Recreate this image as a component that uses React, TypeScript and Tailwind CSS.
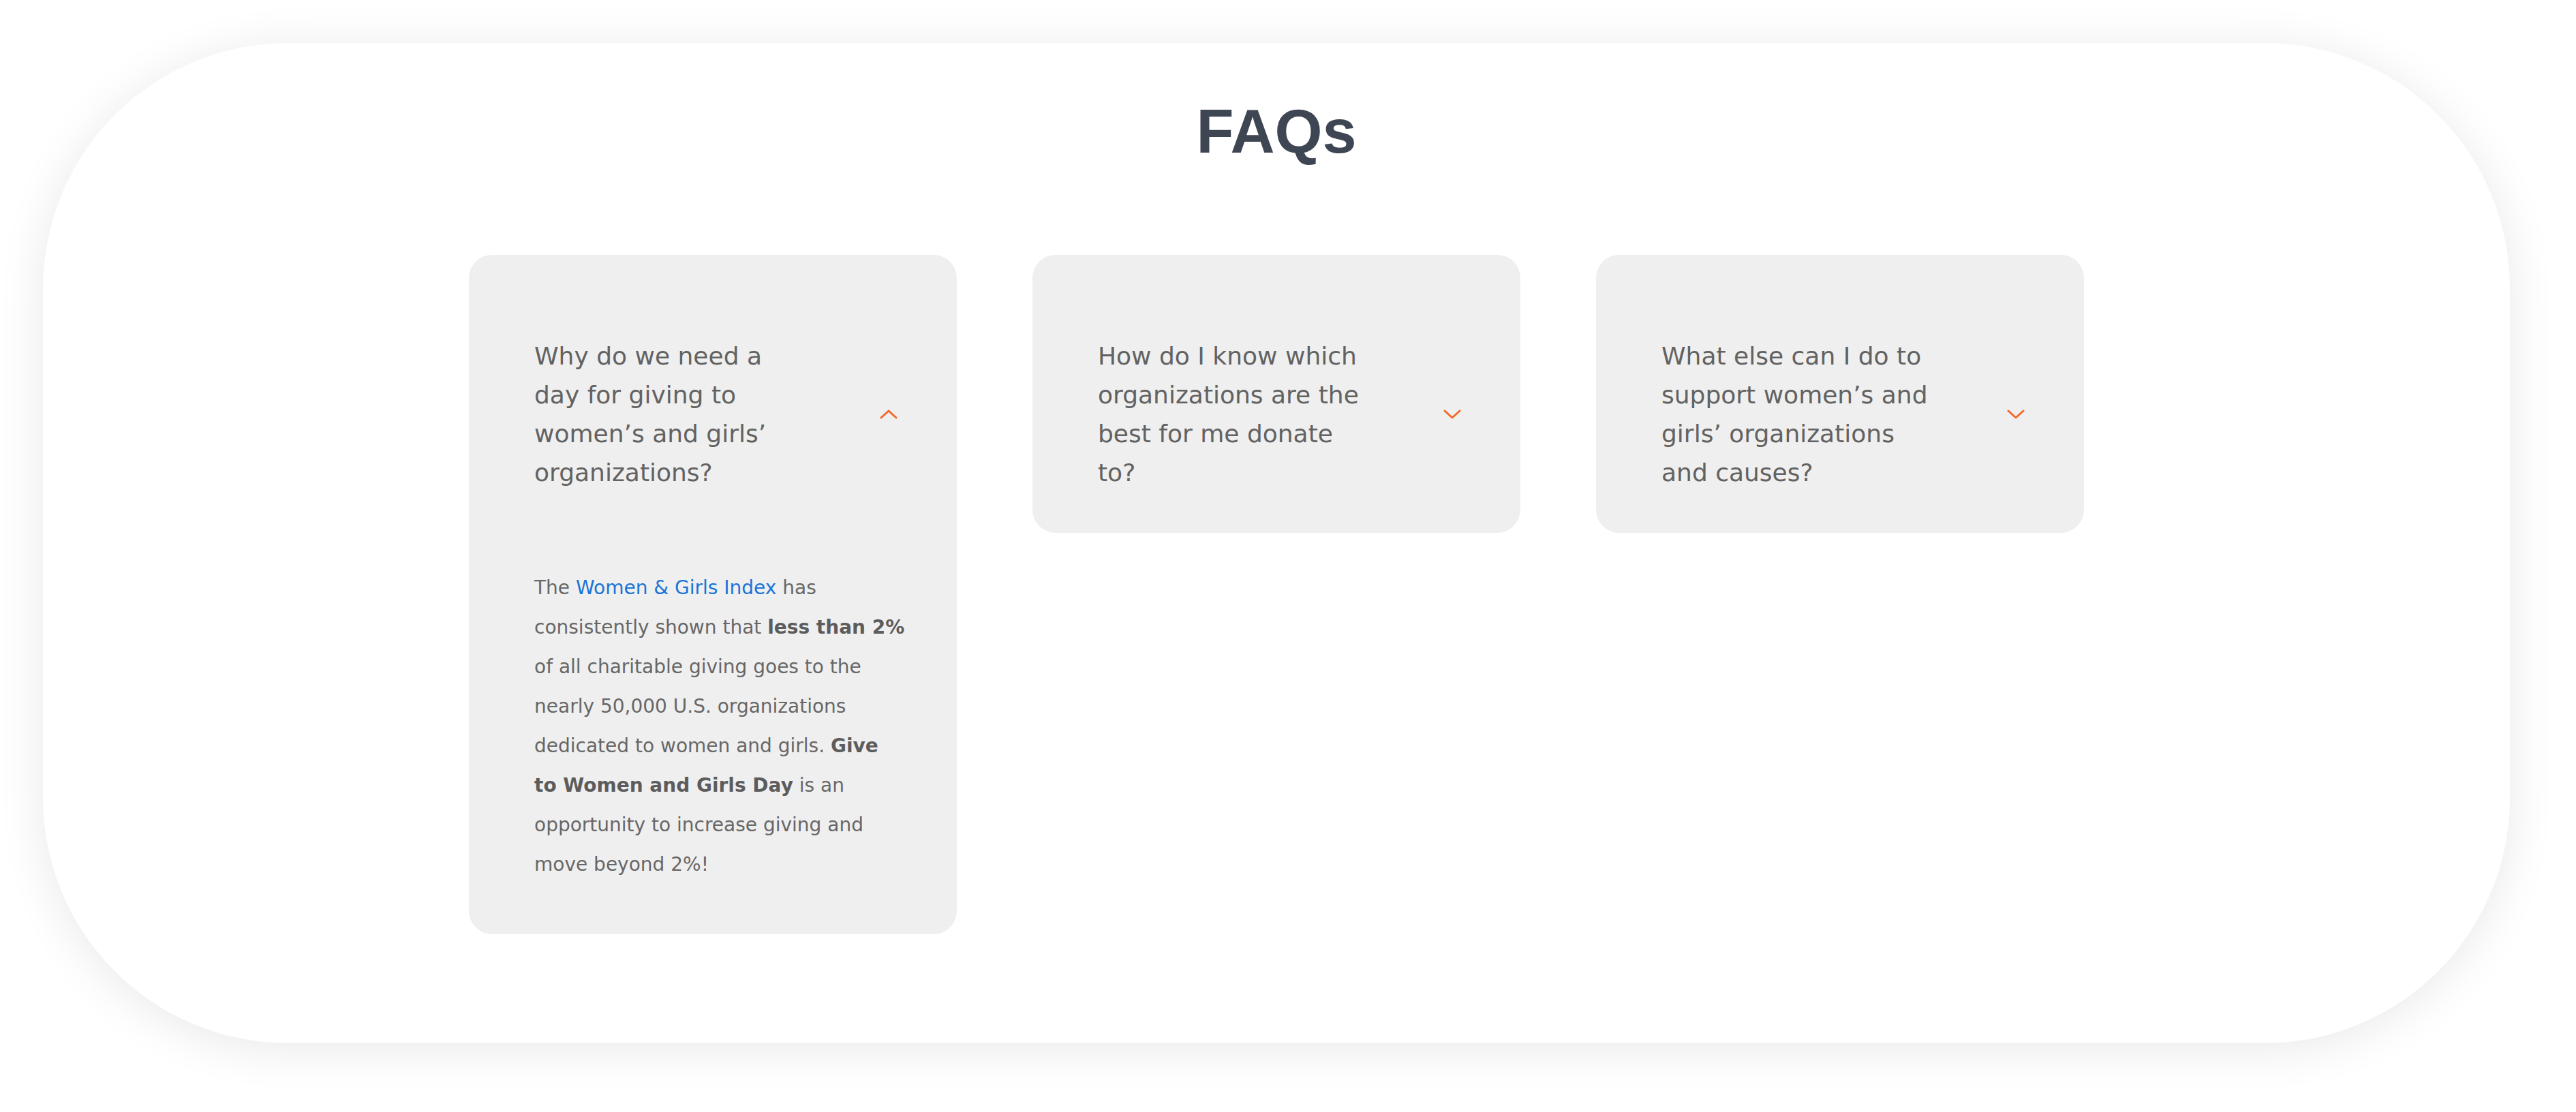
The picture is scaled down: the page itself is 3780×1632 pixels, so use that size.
const faqs = [
  {
    q: ["Why do we need a", "day for giving to", "women’s and girls’", "organizations?"],
    open: true,
  },
  {
    q: ["How do I know which", "organizations are the", "best for me donate", "to?"],
    open: false,
  },
  {
    q: ["What else can I do to", "support women’s and", "girls’ organizations", "and causes?"],
    open: false,
  },
];

function Chevron({ up }: { up: boolean }) {
  return (
    <svg width="26" height="14" viewBox="0 0 26 14" fill="none" className="shrink-0">
      <polyline
        points={up ? "2,12 13,2 24,12" : "2,2 13,12 24,2"}
        stroke="#f26a2b"
        strokeWidth="3"
        strokeLinecap="round"
        strokeLinejoin="round"
      />
    </svg>
  );
}

function Answer() {
  return (
    <div className="pl-[96px] pr-[30px] pt-[52px] pb-[73px] text-[28px] leading-[58px] text-[#676767] whitespace-nowrap">
      The <span className="text-[#1b74d8]">Women &amp; Girls Index</span> has
      <br />
      consistently shown that <b className="font-bold text-[#5c5c5c]">less than 2%</b>
      <br />
      of all charitable giving goes to the
      <br />
      nearly 50,000 U.S. organizations
      <br />
      dedicated to women and girls. <b className="font-bold text-[#5c5c5c]">Give</b>
      <br />
      <b className="font-bold text-[#5c5c5c]">to Women and Girls Day</b> is an
      <br />
      opportunity to increase giving and
      <br />
      move beyond 2%!
    </div>
  );
}

export default function App() {
  return (
    <div className="min-h-screen bg-white pl-[63px] pt-[63px] font-['DejaVu_Sans',sans-serif]">
      <section className="flex h-[1468px] w-[3620px] flex-col items-center rounded-[360px] bg-white pt-[85px] shadow-[0_8px_70px_rgba(0,0,0,0.09)]">
        <h2 className="font-['Liberation_Sans',Arial,sans-serif] text-[90px] font-bold leading-none text-[#3e4553]">
          FAQs
        </h2>
        <div className="mt-[136px] flex items-start gap-[111px]">
          {faqs.map((f) => (
            <div key={f.q[0]} className="w-[716px] rounded-[34px] bg-[#efefef]">
              <div className="flex items-center justify-between pl-[96px] pr-[87px] pt-[120px] pb-[60px]">
                <p className="text-[36px] leading-[57px] text-[#626262] whitespace-nowrap">
                  {f.q.map((line, i) => (
                    <span key={i}>
                      {line}
                      {i < f.q.length - 1 && <br />}
                    </span>
                  ))}
                </p>
                <Chevron up={f.open} />
              </div>
              {f.open && <Answer />}
            </div>
          ))}
        </div>
      </section>
    </div>
  );
}
